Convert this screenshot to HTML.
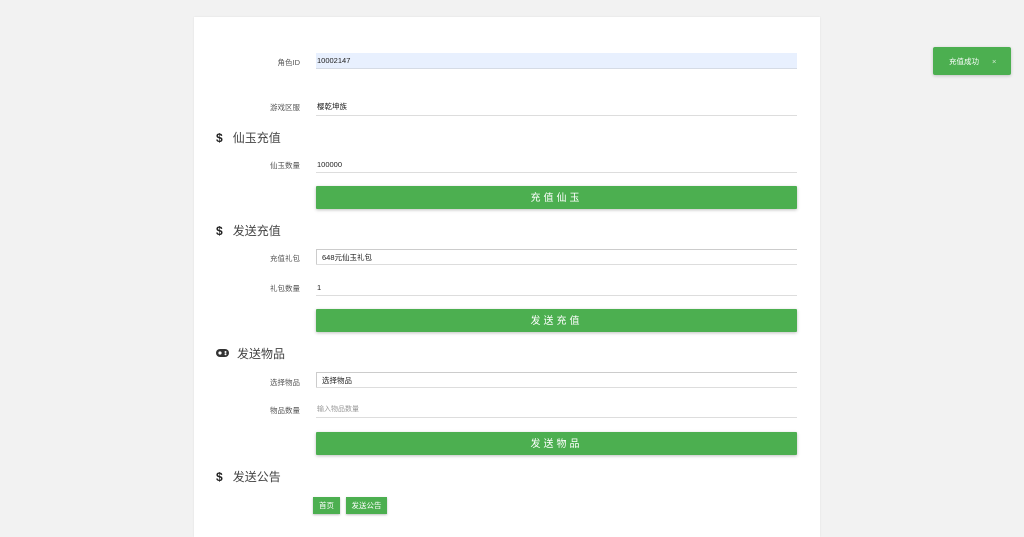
<!DOCTYPE html>
<html><head><meta charset="utf-8"><style>
*{margin:0;padding:0;box-sizing:border-box}
body{width:1024px;height:523px;background:#f2f2f2;font-family:"Liberation Sans","Noto Sans CJK SC",sans-serif;position:relative;overflow:hidden;color:#333}
.card{position:absolute;left:194px;top:17px;width:626px;height:520px;background:#fff;box-shadow:0 0 2px rgba(0,0,0,.08)}
.a{position:absolute}
.lbl{position:absolute;right:724px;font-size:7.5px;color:#555;text-align:right;white-space:nowrap}
.inp{position:absolute;left:316px;width:481px;font-size:7.5px;color:#222;border-bottom:1px solid #ddd;padding-left:1px}
.btn{position:absolute;left:316px;width:481px;height:23px;background:#4caf50;color:#fff;font-size:10px;letter-spacing:3px;text-align:center;line-height:25px;box-shadow:0 1px 3px rgba(0,0,0,.25);border-radius:1px}
.h{position:absolute;left:216px;font-size:12px;color:#444;white-space:nowrap}
.h b{font-size:12px;margin-right:10px;color:#222}
.sel{position:absolute;left:316px;width:481px;height:16px;border:1px solid #ccc;border-right:none;font-size:7.5px;line-height:15px;padding-left:5px;color:#222}
.sb{position:absolute;top:497px;height:17px;background:#4caf50;color:#fff;font-size:7.5px;line-height:18px;text-align:center;box-shadow:0 1px 2px rgba(0,0,0,.25)}
</style></head><body>
<div class="card"></div>
<div class="lbl" style="top:57px">角色ID</div>
<div class="inp" style="top:53px;height:16px;background:#e8f0fe;line-height:16px;border-bottom:1px solid #d5dbe5">10002147</div>
<div class="lbl" style="top:102px">游戏区服</div>
<div class="inp" style="top:100px;height:16px;line-height:13px">樱乾坤族</div>
<div class="h" style="top:129px"><b>$</b>仙玉充值</div>
<div class="lbl" style="top:160px">仙玉数量</div>
<div class="inp" style="top:158px;height:15px;line-height:13px">100000</div>
<div class="btn" style="top:186px">充值仙玉</div>
<div class="h" style="top:222px"><b>$</b>发送充值</div>
<div class="lbl" style="top:253px">充值礼包</div>
<div class="sel" style="top:249px">648元仙玉礼包</div>
<div class="a" style="left:316px;top:264px;width:481px;border-bottom:1px solid #ddd"></div>
<div class="lbl" style="top:283px">礼包数量</div>
<div class="inp" style="top:281px;height:15px;line-height:13px">1</div>
<div class="btn" style="top:309px">发送充值</div>
<div class="h" style="top:345px"><svg width="13" height="8" viewBox="0 0 13 8" style="margin-right:8px;vertical-align:1px"><rect x="0" y="0" width="13" height="8" rx="4" fill="#333"/><circle cx="4" cy="4" r="1.6" fill="#fff"/><circle cx="9.5" cy="3" r="1" fill="#fff"/><circle cx="9.5" cy="5.2" r="1" fill="#fff"/></svg>发送物品</div>
<div class="lbl" style="top:377px">选择物品</div>
<div class="sel" style="top:372px">选择物品</div>
<div class="a" style="left:316px;top:387px;width:481px;border-bottom:1px solid #ddd"></div>
<div class="lbl" style="top:405px">物品数量</div>
<div class="inp" style="top:403px;height:15px;line-height:13px;color:#999;font-size:7px">输入物品数量</div>
<div class="btn" style="top:432px">发送物品</div>
<div class="h" style="top:468px"><b>$</b>发送公告</div>
<div class="sb" style="left:313px;width:27px">首页</div>
<div class="sb" style="left:346px;width:41px">发送公告</div>
<div class="a" style="left:933px;top:47px;width:78px;height:28px;background:#4caf50;color:#fff;font-size:7.5px;line-height:29px;padding-left:16px;box-shadow:0 1px 3px rgba(0,0,0,.2);border-radius:2px">充值成功<span style="margin-left:13px;color:#d5ebd5">×</span></div>
</body></html>
